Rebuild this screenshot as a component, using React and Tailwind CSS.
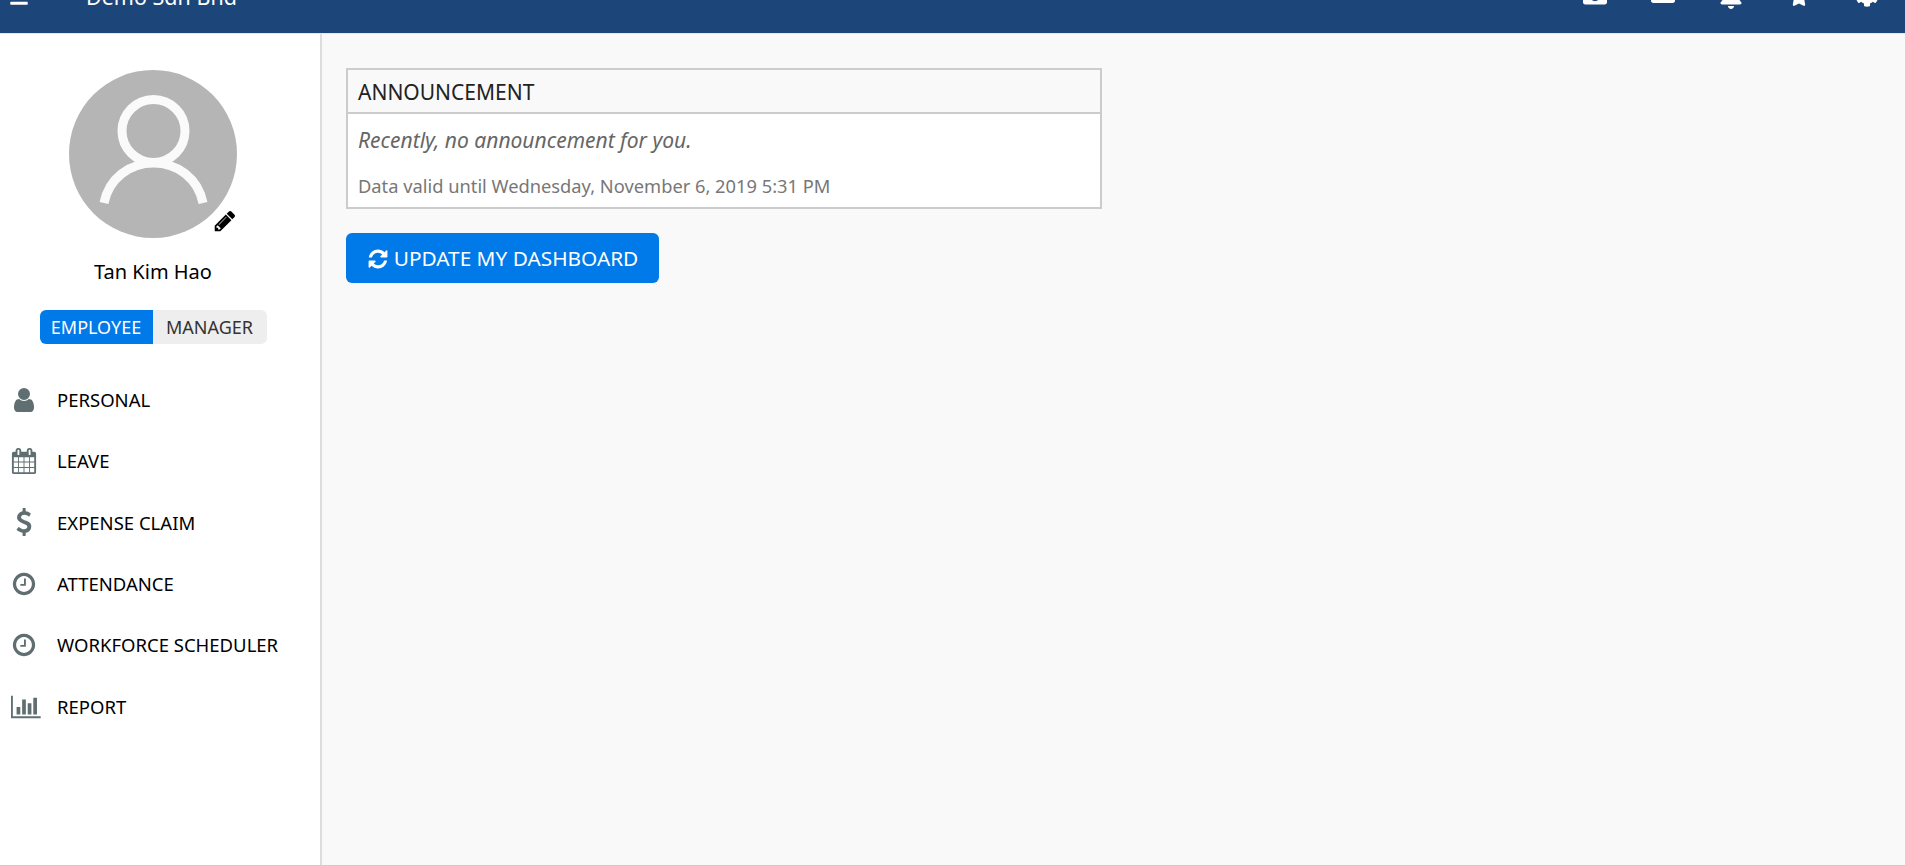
import { FaBars, FaBell, FaCamera, FaCog, FaEnvelope, FaStar } from 'react-icons/fa';

const ICONS = {
  user: 'M1536 1399q0 109-62.5 187t-150.5 78h-854q-88 0-150.5-78t-62.5-187q0-85 8.5-160.5t31.5-152 58.5-131 94-89 134.5-34.5q131 128 313 128t313-128q76 0 134.5 34.5t94 89 58.5 131 31.5 152 8.5 160.5zm-256-887q0 159-112.5 271.5t-271.5 112.5-271.5-112.5-112.5-271.5 112.5-271.5 271.5-112.5 271.5 112.5 112.5 271.5z',
  calendar: 'M192 1664h288v-288h-288v288zm352 0h320v-288h-320v288zm-352-352h288v-320h-288v320zm352 0h320v-320h-320v320zm-352-384h288v-288h-288v288zm736 736h320v-288h-320v288zm-384-736h320v-288h-320v288zm768 736h288v-288h-288v288zm-384-352h320v-320h-320v320zm-352-864v-288q0-13-9.5-22.5t-22.5-9.5h-64q-13 0-22.5 9.5t-9.5 22.5v288q0 13 9.5 22.5t22.5 9.5h64q13 0 22.5-9.5t9.5-22.5zm736 864h288v-320h-288v320zm-384-384h320v-288h-320v288zm384 0h288v-288h-288v288zm32-480v-288q0-13-9.5-22.5t-22.5-9.5h-64q-13 0-22.5 9.5t-9.5 22.5v288q0 13 9.5 22.5t22.5 9.5h64q13 0 22.5-9.5t9.5-22.5zm384-64v1280q0 52-38 90t-90 38h-1408q-52 0-90-38t-38-90v-1280q0-52 38-90t90-38h128v-96q0-66 47-113t113-47h64q66 0 113 47t47 113v96h384v-96q0-66 47-113t113-47h64q66 0 113 47t47 113v96h128q52 0 90 38t38 90z',
  usd: 'M1362 1185q0 153-99.5 263.5t-258.5 136.5v175q0 14-9 23t-23 9h-135q-13 0-22.5-9.5t-9.5-22.5v-175q-66-9-127.5-31t-101.5-44.5-74-48-46.5-37.5-17.5-18q-17-21-2-41l103-135q7-10 23-12 15-2 24 9l2 2q113 99 243 125 37 8 74 8 81 0 142.5-43t61.5-122q0-28-15-53t-33.5-42-58.5-37.5-66-32-80-32.5q-39-16-61.5-25t-61.5-26.5-62.5-31-56.5-35.5-53.5-42.5-43.5-49-35.5-58-21-66.5-8.5-78q0-138 98-242t255-134v-180q0-13 9.5-22.5t22.5-9.5h135q14 0 23 9t9 23v176q57 6 110.5 23t87 33.5 63.5 37.5 39 29 15 14q17 18 5 38l-81 146q-8 15-23 16-14 3-27-7-3-3-14.5-12t-39-26.5-58.5-32-74.5-26-85.5-11.5q-95 0-155 43t-60 111q0 26 8.5 48t29.5 41.5 39.5 33 56 31 60.5 27 70 27.5q53 20 81 31.5t76 35 75.5 42.5 62 50 53 63.5 31.5 76.5 13 94z',
  clock: 'M1024 544v448q0 14-9 23t-23 9h-320q-14 0-23-9t-9-23v-64q0-14 9-23t23-9h224v-352q0-14 9-23t23-9h64q14 0 23 9t9 23zm416 352q0-148-73-273t-198-198-273-73-273 73-198 198-73 273 73 273 198 198 273 73 273-73 198-198 73-273zm224 0q0 209-103 385.5t-279.5 279.5-385.5 103-385.5-103-279.5-279.5-103-385.5 103-385.5 279.5-279.5 385.5-103 385.5 103 279.5 279.5 103 385.5z',
  chart: 'M640 896v512h-256v-512h256zm384-512v1024h-256v-1024h256zm1024 1152v128h-2048v-1536h128v1408h1920zm-640-896v768h-256v-768h256zm384-384v1152h-256v-1152h256z',
  pencil: 'M491 1536l91-91-235-235-91 91v107h128v128h107zm523-928q0-22-22-22-10 0-17 7l-542 542q-7 7-7 17 0 22 22 22 10 0 17-7l542-542q7-7 7-17zm-54-192l416 416-832 832h-416v-416zm683 96q0 53-37 90l-166 166-416-416 166-165q36-38 90-38 53 0 91 38l235 234q37 39 37 91z',
  refresh: 'M1639 1056q0 5-1 7-64 268-268 434.5t-478 166.5q-146 0-282.5-55t-243.5-157l-129 129q-19 19-45 19t-45-19-19-45v-448q0-26 19-45t45-19h448q26 0 45 19t19 45-19 45l-137 137q71 66 161 102t187 36q134 0 250-65t186-179q11-17 53-117 8-23 30-23h192q13 0 22.5 9.5t9.5 22.5zm25-800v448q0 26-19 45t-45 19h-448q-26 0-45-19t-19-45 19-45l138-138q-148-137-349-137-134 0-250 65t-186 179q-11 17-53 117-8 23-30 23h-199q-13 0-22.5-9.5t-9.5-22.5v-7q65-268 270-434.5t480-166.5q146 0 284 55.5t245 156.5l130-129q19-19 45-19t45 19 19 45z',
};

const NAV = [
  { label: 'PERSONAL', icon: 'user', size: 28 },
  { label: 'LEAVE', icon: 'calendar', size: 26 },
  { label: 'EXPENSE CLAIM', icon: 'usd', size: 28 },
  { label: 'ATTENDANCE', icon: 'clock', size: 26 },
  { label: 'WORKFORCE SCHEDULER', icon: 'clock', size: 26 },
  { label: 'REPORT', icon: 'chart', size: 26 },
];

function FaIcon({ name, size, className }) {
  const w = name === 'chart' ? 2048 : 1792;
  return (
    <svg viewBox={`0 0 ${w} 1792`} width={(size * w) / 1792} height={size} fill="currentColor" fillRule="evenodd" className={className}>
      <path d={ICONS[name]} />
    </svg>
  );
}

function Header() {
  return (
    <header className="-mt-[39px] flex h-[73px] shrink-0 items-center border-b border-[#e6e6e6] bg-[#1c4679] text-white">
      <div className="flex w-[86px] pl-[9px]">
        <FaBars size={20} />
      </div>
      <span className="text-[21.5px]">Demo Sdn Bhd</span>
      <div className="ml-auto flex items-center pr-[5px] pb-[6px]">
        <div className="flex w-[68px] justify-center"><FaCamera size={24} /></div>
        <div className="flex w-[68px] justify-center"><FaEnvelope size={24} /></div>
        <div className="flex w-[68px] justify-center pt-[6px]"><FaBell size={24} /></div>
        <div className="flex w-[68px] justify-center pt-[6px]"><FaStar size={20} /></div>
        <div className="-mr-[1px] flex w-[68px] justify-center pt-[2px]"><FaCog size={24} /></div>
      </div>
    </header>
  );
}

function Sidebar() {
  return (
    <aside className="w-[322px] shrink-0 border-r-2 border-[#dddddd] bg-white">
      <div className="flex w-[306px] flex-col items-center">
        <div className="relative mt-[36px] h-[168px] w-[168px] rounded-full bg-[#b5b5b5]">
          <svg viewBox="0 0 168 168" width="168" height="168" fill="none" stroke="#fafafa" strokeWidth="9">
            <circle cx="84.5" cy="61" r="31.5" />
            <path d="M35 133C40 108 61 93 84.5 93S129 108 134 133" />
          </svg>
          <FaIcon name="pencil" size={24} className="absolute right-0 bottom-[5px] text-black" />
        </div>
        <div className="mt-[20px] text-[20px] leading-[27px] text-black">Tan Kim Hao</div>
        <div className="mt-[25px] flex h-[34px] w-[227px] overflow-hidden rounded-[6px] text-[18px]">
          <div className="flex w-[113px] items-center justify-center bg-[#007ae8] text-white">EMPLOYEE</div>
          <div className="flex flex-1 items-center justify-center bg-[#eeeeee] text-[#333333]">MANAGER</div>
        </div>
      </div>
      <nav className="mt-[25px]">
        {NAV.map((item) => (
          <div key={item.label} className="flex h-[61.4px] items-center">
            <div className={item.icon === 'chart' ? 'flex w-[52px] justify-center text-[#5f6f71]' : 'flex w-[48px] justify-center text-[#5f6f71]'}>
              <FaIcon name={item.icon} size={item.size} />
            </div>
            <span className={item.icon === 'chart' ? 'ml-[5px] text-[18.5px] text-black' : 'ml-[9px] text-[18.5px] text-black'}>{item.label}</span>
          </div>
        ))}
      </nav>
    </aside>
  );
}

function Announcement() {
  return (
    <section className="w-[756px] border-2 border-[#cccccc]">
      <div className="flex h-[44px] items-center border-b-2 border-[#cccccc] px-[10px] pt-[3px] text-[21px] text-[#222222]">ANNOUNCEMENT</div>
      <div className="h-[93px] bg-white px-[10px]">
        <p className="pt-[13px] text-[21px] leading-[27px] text-[#666666] italic">Recently, no announcement for you.</p>
        <p className="pt-[20px] text-[18.3px] leading-[24px] text-[#777777]">Data valid until Wednesday, November 6, 2019 5:31 PM</p>
      </div>
    </section>
  );
}

export default function App() {
  return (
    <div className="flex h-[866px] flex-col overflow-hidden bg-[#f9f9f9] font-['Noto_Sans',sans-serif]">
      <Header />
      <div className="flex min-h-0 flex-1 border-b border-[#cccccc]">
        <Sidebar />
        <main className="flex-1 pt-[34px] pl-[24px]">
          <Announcement />
          <button className="mt-[24px] flex h-[50px] w-[313px] items-center justify-center gap-[5px] rounded-[6px] bg-[#007ae8] pt-[2px] text-[20.8px] text-white">
            <FaIcon name="refresh" size={22} />
            UPDATE MY DASHBOARD
          </button>
        </main>
      </div>
    </div>
  );
}
